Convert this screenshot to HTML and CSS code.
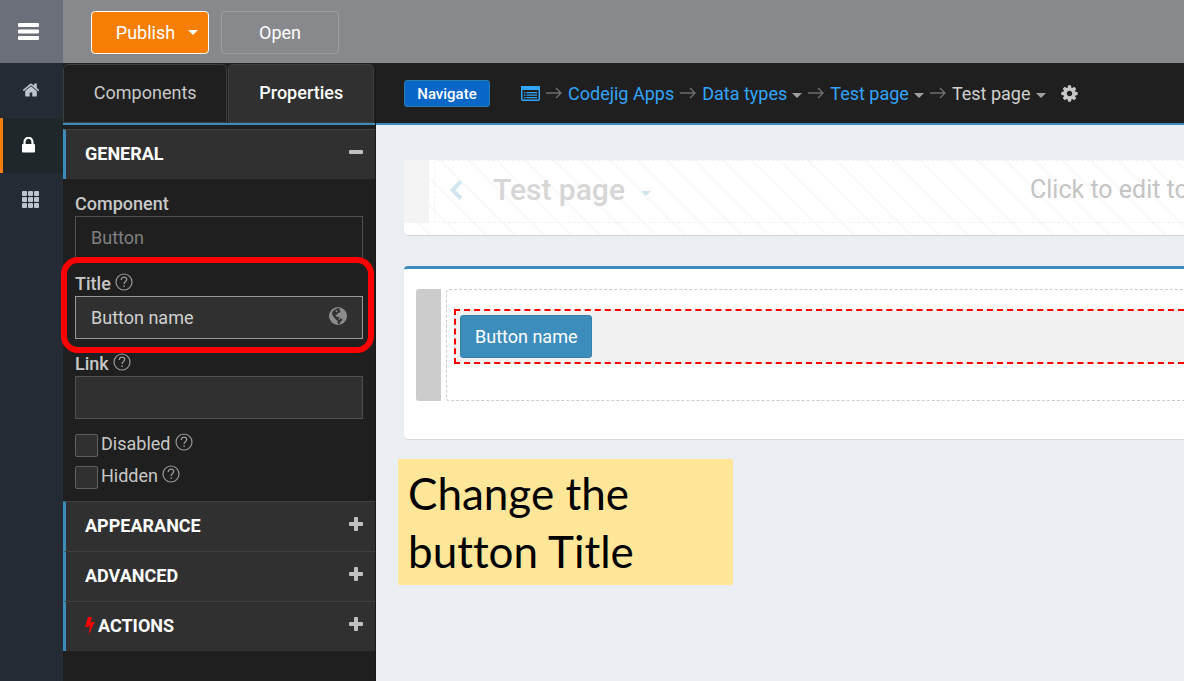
FILE: index.html
```
<!DOCTYPE html>
<html lang="en">
<head>
  <meta charset="UTF-8">
  <meta name="viewport" content="width=device-width, initial-scale=1.0">
  <title>Test page</title>
  <link rel="stylesheet" href="styles.css">
</head>
<body>
  <!-- shared icons -->
  <svg class="sprite" aria-hidden="true">
    <symbol id="i-help" viewBox="0 0 18 18">
      <circle cx="9" cy="9" r="8" fill="none" stroke="currentColor" stroke-width="1.2"/>
      <path d="M6.3 6.9C6.3 5.2 7.4 4.2 9 4.2s2.7 1 2.7 2.4c0 1.9-2.6 2-2.6 4.5" fill="none" stroke="currentColor" stroke-width="1.3"/>
      <rect x="8.4" y="12.4" width="1.4" height="1.5" fill="currentColor"/>
    </symbol>
    <symbol id="i-arrow" viewBox="0 0 16 12">
      <path d="M0 6h15M10 1l5 5-5 5" fill="none" stroke="currentColor" stroke-width="1.4"/>
    </symbol>
    <symbol id="i-plus" viewBox="0 0 14 14">
      <path d="M5 1q0-1 1-1h2q1 0 1 1v4h4q1 0 1 1v2q0 1-1 1H9v4q0 1-1 1H6q-1 0-1-1V9H1q-1 0-1-1V6q0-1 1-1h4z" fill="currentColor"/>
    </symbol>
  </svg>

  <header class="topbar">
    <button class="menu-btn" aria-label="Menu">
      <svg width="21" height="17" viewBox="0 0 21 17" fill="currentColor"><rect width="21" height="4" rx="1"/><rect y="6.5" width="21" height="4" rx="1"/><rect y="13" width="21" height="4" rx="1"/></svg>
    </button>
    <div class="topbar-actions">
      <button class="btn btn-publish">Publish <span class="caret"></span></button>
      <button class="btn btn-open">Open</button>
    </div>
  </header>

  <div class="layout">
    <nav class="sidebar">
      <a href="#" class="side-link" aria-label="Home">
        <svg width="18" height="18" viewBox="0 0 1792 1792" fill="currentColor"><path d="M1472 992v480q0 26-19 45t-45 19h-384v-384h-256v384h-384q-26 0-45-19t-19-45v-480q0-1 .5-3t.5-3l575-474 575 474q1 2 1 6zm223-69l-62 74q-8 9-21 11h-3q-13 0-21-7l-692-577-692 577q-12 8-24 7-13-2-21-11l-62-74q-8-10-7-23.5t11-21.5l719-599q32-26 76-26t76 26l244 204v-195q0-14 9-23t23-9h192q14 0 23 9t9 23v408l219 182q10 8 11 21.5t-7 23.5z"/></svg>
      </a>
      <a href="#" class="side-link active" aria-label="Security">
        <svg width="13" height="16" viewBox="320 192 1152 1344" fill="currentColor"><path d="M640 768h512v-192q0-106-75-181t-181-75-181 75-75 181v192zm832 96v576q0 40-28 68t-68 28h-960q-40 0-68-28t-28-68v-576q0-40 28-68t68-28h32v-192q0-184 132-316t316-132 316 132 132 316v192h32q40 0 68 28t28 68z"/></svg>
      </a>
      <a href="#" class="side-link" aria-label="Apps">
        <svg width="18" height="18" viewBox="0 0 18 18" fill="currentColor"><rect width="5" height="5" rx="1"/><rect x="6" width="5" height="5" rx="1"/><rect x="12" width="5" height="5" rx="1"/><rect y="6" width="5" height="5" rx="1"/><rect x="6" y="6" width="5" height="5" rx="1"/><rect x="12" y="6" width="5" height="5" rx="1"/><rect y="12" width="5" height="5" rx="1"/><rect x="6" y="12" width="5" height="5" rx="1"/><rect x="12" y="12" width="5" height="5" rx="1"/></svg>
      </a>
    </nav>

    <aside class="panel">
      <div class="tabs">
        <button class="tab">Components</button>
        <button class="tab active">Properties</button>
      </div>

      <button class="section-head">GENERAL
        <svg class="toggle" viewBox="0 0 14 14"><rect y="5" width="14" height="4" rx="1" fill="currentColor"/></svg>
      </button>
      <div class="section-body">
        <div class="form-group">
          <label for="component">Component</label>
          <input type="text" id="component" value="Button" disabled>
        </div>
        <div class="form-group highlight">
          <label for="title">Title <svg class="help"><use href="#i-help"/></svg></label>
          <input type="text" id="title" class="current" value="Button name">
          <svg class="globe" width="18" height="18" viewBox="0 0 18 18">
            <circle cx="9" cy="9" r="9" fill="#8c8c8c"/>
            <path d="M6 2.5l3-1.5 2 .5-1 1.5 1.5.5-.5 2-2 .5-1 1.500-1.500.5.5 1.500 2.500.5 3 1.500 1 1.500-2 2-1.500 2.500-1-.5-.5-3-2-2L4 9 3 6.500 4 4z" fill="#303030"/>
            <path d="M6.500 3.500l1.500-.5.5 1.500-1.500 1zM10 10.500l1.500 1-1 1.500-1-1z" fill="#8c8c8c"/>
          </svg>
        </div>
        <div class="form-group">
          <label for="link">Link <svg class="help"><use href="#i-help"/></svg></label>
          <input type="text" id="link">
        </div>
        <div class="check">
          <input type="checkbox" id="disabled">
          <label for="disabled">Disabled <svg class="help"><use href="#i-help"/></svg></label>
        </div>
        <div class="check">
          <input type="checkbox" id="hidden">
          <label for="hidden">Hidden <svg class="help"><use href="#i-help"/></svg></label>
        </div>
      </div>

      <button class="section-head">APPEARANCE <svg class="toggle"><use href="#i-plus"/></svg></button>
      <button class="section-head">ADVANCED <svg class="toggle"><use href="#i-plus"/></svg></button>
      <button class="section-head">
        <svg class="bolt" width="10" height="18" viewBox="0 0 10 18"><path d="M3 0h4L5.5 5.5 10 4.5 3.5 18 5 9 0 10.5z" fill="#f00"/></svg>ACTIONS
        <svg class="toggle"><use href="#i-plus"/></svg>
      </button>
    </aside>

    <main class="main">
      <nav class="crumbs">
        <button class="btn-navigate">Navigate</button>
        <a href="#" aria-label="Apps list">
          <svg class="crumb-icon" width="19" height="15" viewBox="0 0 19 15"><rect x=".75" y=".75" width="17.5" height="13.5" rx="1" fill="none" stroke="currentColor" stroke-width="1.5"/><path d="M0 0h19v4H0zM3 6h1.5v1.3H3zM5.5 6H16v1.3H5.5zM3 8.5h1.5v1.3H3zM5.5 8.5H16v1.3H5.5zM3 11h1.5v1.3H3zM5.5 11H16v1.3H5.5z" fill="currentColor"/></svg>
        </a>
        <svg class="arrow"><use href="#i-arrow"/></svg>
        <a href="#">Codejig Apps</a>
        <svg class="arrow"><use href="#i-arrow"/></svg>
        <a href="#">Data types <span class="caret"></span></a>
        <svg class="arrow"><use href="#i-arrow"/></svg>
        <a href="#">Test page <span class="caret"></span></a>
        <svg class="arrow"><use href="#i-arrow"/></svg>
        <a href="#" class="current-page">Test page <span class="caret"></span></a>
        <button class="gear" aria-label="Settings">
          <svg width="19" height="19" viewBox="0 0 1792 1792" fill="currentColor"><path d="M1152 896q0-106-75-181t-181-75-181 75-75 181 75 181 181 75 181-75 75-181zm512-109v222q0 12-8 23t-20 13l-185 28q-19 54-39 91 35 50 107 138 10 12 10 25t-9 23q-27 37-99 108t-94 71q-12 0-26-9l-138-108q-44 23-91 38-16 136-29 186-7 28-36 28h-222q-14 0-24.5-8.5t-11.5-21.5l-28-184q-49-16-90-37l-141 107q-10 9-25 9-14 0-25-11-126-114-165-168-7-10-7-23 0-12 8-23 15-21 51-66.5t54-70.5q-27-50-41-99l-183-27q-13-2-21-12.5t-8-23.5v-222q0-12 8-23t19-13l186-28q14-46 39-92-40-57-107-138-10-12-10-24 0-10 9-23 26-36 98.5-107.5t94.5-71.5q13 0 26 10l138 107q44-23 91-38 16-136 29-186 7-28 36-28h222q14 0 24.5 8.5t11.5 21.5l28 184q49 16 90 37l142-107q9-9 24-9 13 0 25 10 129 119 165 170 7 8 7 22 0 12-8 23-15 21-51 66.5t-54 70.5q26 50 41 98l183 28q13 2 21 12.5t8 23.5z"/></svg>
        </button>
      </nav>

      <div class="canvas">
        <div class="card card-head">
          <div class="handle"></div>
          <div class="zone">
            <svg class="back" width="14" height="20" viewBox="0 0 14 20"><path d="M12 1.5L3.5 10l8.5 8.5" fill="none" stroke="currentColor" stroke-width="4"/></svg>
            <h1>Test page</h1>
            <span class="caret"></span>
            <div class="hint">Click to edit to</div>
          </div>
        </div>

        <div class="card card-body">
          <div class="handle"></div>
          <div class="zone">
            <div class="selected">
              <button class="btn-primary">Button name</button>
            </div>
          </div>
        </div>

        <div class="note">Change the<br>button Title</div>
      </div>
    </main>
  </div>
</body>
</html>
```
FILE: styles.css
```
* {
  box-sizing: border-box;
}
body {
  margin: 0;
  min-height: 100vh;
  display: flex;
  flex-direction: column;
  font-family: Roboto, "Liberation Sans", sans-serif;
  font-size: 18px;
  line-height: 25px;
  background: #ebeef3;
}
button, input {
  font: inherit;
  margin: 0;
}
button {
  cursor: pointer;
}
a {
  text-decoration: none;
}
svg {
  flex: none;
}
.sprite {
  position: absolute;
  width: 0;
  height: 0;
}
.caret {
  flex: none;
  border: 5px solid transparent;
  border-top-color: currentColor;
  border-bottom: 0;
}

/* top bar */
.topbar {
  display: flex;
  height: 63px;
  background: #88898d;
}
.menu-btn {
  width: 63px;
  padding: 0 6px 0 0;
  border: 0;
  background: #6b6f79;
  color: #fff;
  display: flex;
  align-items: center;
  justify-content: center;
}
.topbar-actions {
  display: flex;
  align-items: center;
  gap: 12px;
  padding: 2px 28px 0;
}
.btn {
  display: flex;
  align-items: center;
  justify-content: center;
  width: 118px;
  height: 43px;
  border: 1px solid #9c9da1;
  border-radius: 4px;
  color: #fff;
  background: none;
}
.btn-publish {
  gap: 13px;
  padding: 0 0 0 14px;
  background: #f77e05;
  border-color: #fff;
}

/* left icons */
.layout {
  flex: 1;
  display: flex;
}
.sidebar {
  flex: none;
  width: 63px;
  background: #242b35;
}
.side-link {
  display: flex;
  align-items: center;
  height: 55px;
  padding: 0 0 2px 19px;
  border-left: 3px solid transparent;
  color: #bec5cd;
}
.side-link.active {
  background: #1f272b;
  border-left-color: #f77e05;
  color: #fff;
}

/* properties panel */
.panel {
  flex: none;
  width: 313px;
  background: #1f1f1f;
  border-right: 1px solid #1a1a1a;
}
.tabs {
  display: flex;
  gap: 1px;
  height: 62px;
  padding: 1px 1px 0 0;
  margin-bottom: 4px;
  border-bottom: 2px solid #3c8dbc;
}
.tab {
  flex: auto;
  padding: 0 12px 2px;
  border: 1px solid #3f3f3f;
  border-radius: 5px 5px 0 0;
  background: #1f1f1f;
  color: #c8c8c8;
}
.tab.active {
  background: #303030;
  color: #fff;
  font-weight: 500;
}
.section-head {
  display: flex;
  align-items: center;
  width: 100%;
  height: 50px;
  padding: 0 12px 2px 19px;
  border: 0;
  border-top: 1px solid #404040;
  border-left: 3px solid #3c8dbc;
  background: #303030;
  color: #fff;
  font-weight: 700;
}
.toggle {
  width: 14px;
  height: 14px;
  margin-left: auto;
  margin-bottom: 4px;
  color: #c0c0c0;
}
.bolt {
  margin-right: 3px;
}
.section-body {
  padding: 12px 12px 6px;
  color: #c8c8c8;
}
.form-group {
  position: relative;
  margin-bottom: 12px;
}
.form-group label {
  display: block;
  font-weight: 500;
}
.form-group input {
  display: block;
  width: 100%;
  height: 43px;
  padding: 0 15px;
  border: 1px solid #505050;
  border-radius: 0;
  background: #303030;
  color: #d0d0d0;
}
.form-group input:disabled {
  background: #1f1f1f;
  color: #808080;
}
.form-group input.current {
  border-color: #999;
}
.help {
  width: 18px;
  height: 18px;
  vertical-align: -1px;
  color: #999;
}
.globe {
  position: absolute;
  right: 16px;
  bottom: 14px;
}
/* frame around the current field */
.highlight::after {
  content: "";
  position: absolute;
  inset: -14px -11px -14px -14px;
  border: 6px solid #f00;
  border-radius: 17px;
  pointer-events: none;
}
.check {
  display: flex;
  gap: 3px;
  height: 32px;
}
.check input {
  appearance: none;
  width: 23px;
  height: 23px;
  margin-top: 3px;
  border: 1px solid #606060;
  border-radius: 2px;
  background: #303030;
}

/* breadcrumbs */
.main {
  flex: 1;
  min-width: 0;
}
.crumbs {
  display: flex;
  align-items: center;
  height: 62px;
  padding: 0 28px;
  background: #1f1f1f;
  border-bottom: 2px solid #3c8dbc;
  white-space: nowrap;
}
.crumbs a {
  display: flex;
  align-items: center;
  gap: 5px;
  color: #32a4fa;
}
.crumbs a.current-page {
  color: #d0d0d0;
}
.crumbs .caret {
  margin-top: 4px;
  color: #a0a0a0;
}
.btn-navigate {
  width: 86px;
  height: 27px;
  margin-right: 31px;
  padding: 1px 0 0;
  border: 1px solid #2e7bb0;
  border-radius: 3px;
  background: #0866c6;
  color: #fff;
  font-size: 15px;
  font-weight: 500;
  line-height: 20px;
}
.arrow {
  width: 16px;
  height: 12px;
  margin: 0 6px;
  color: #707070;
}
.gear {
  display: flex;
  margin-left: 14px;
  padding: 0;
  border: 0;
  background: none;
  color: #c8c8c8;
}

/* page canvas */
.canvas {
  padding: 35px 0 35px 28px;
}
.card {
  display: flex;
  gap: 5px;
  background: #fff;
  border-radius: 4px 0 0 4px;
  box-shadow: 0 1px 1px rgba(0, 0, 0, 0.1);
}
.handle {
  flex: none;
  width: 25px;
  border-radius: 3px 0 0 3px;
  background: #ccc;
}
.zone {
  flex: 1;
  min-width: 0;
  border: 1px dashed #ccc;
  border-right: 0;
  border-radius: 3px 0 0 3px;
}
.card-head {
  padding-bottom: 12px;
  margin-bottom: 31px;
  background: repeating-linear-gradient(45deg, #fff 0, #fff 17px, #fafafa 17px, #fafafa 20px);
}
.card-head .handle {
  background: #f4f4f4;
}
.card-head .zone {
  display: flex;
  align-items: center;
  height: 63px;
  padding: 0 0 4px 14px;
  border-color: #f2f2f2;
}
.back, .card-head .caret {
  color: #d2e4ef;
}
.card-head .caret {
  margin: 8px 0 0 16px;
}
.card-head h1 {
  margin: 0 0 0 30px;
  font-size: 30px;
  font-weight: 500;
  line-height: 40px;
  color: #d6d6d6;
}
.hint {
  width: 154px;
  margin-left: auto;
  overflow: hidden;
  white-space: nowrap;
  font-size: 25px;
  line-height: 34px;
  color: #c4c4c4;
}
.card-body {
  padding: 20px 0 38px 12px;
  margin-bottom: 20px;
  border-top: 3px solid #3c8dbc;
}
.card-body .zone {
  padding: 19px 0 36px 7px;
}
.selected {
  padding: 4px;
  border: 2px dashed #f00;
  border-right: 0;
  background: #f1f1f1;
}
.btn-primary {
  display: block;
  height: 43px;
  padding: 0 14px;
  border: 1px solid #367fa9;
  border-radius: 3px;
  background: #3c8dbc;
  color: #fff;
}
.note {
  width: 335px;
  margin-left: -6px;
  padding: 5px 10px;
  background: #ffe699;
  color: #000;
  font-family: Lato, sans-serif;
  font-size: 44px;
  font-variant-ligatures: none;
  line-height: 58px;
}
```
